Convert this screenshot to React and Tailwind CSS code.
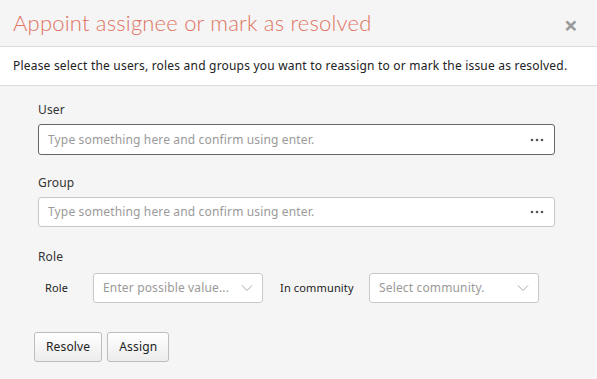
const Dots = () => (
  <svg width="14" height="4" viewBox="0 0 14 4" className="shrink-0">
    <circle cx="2" cy="2" r="1.3" fill="#555" />
    <circle cx="7" cy="2" r="1.3" fill="#555" />
    <circle cx="12" cy="2" r="1.3" fill="#555" />
  </svg>
);

const Chevron = () => (
  <svg width="12" height="8" viewBox="0 0 12 8" className="shrink-0">
    <path d="M1 1.5 L6 6.5 L11 1.5" fill="none" stroke="#a8a8a8" strokeWidth="1" />
  </svg>
);

const App = () => {
  return (
    <div className="w-[597px] h-[379px] bg-[#f5f5f5] overflow-hidden tracking-[0.15px]" style={{ fontFamily: "'Noto Sans', 'DejaVu Sans', sans-serif" }}>
      {/* Header */}
      <div className="h-[47px] flex items-center justify-between pl-[13px] pr-[19px] border-b border-[#dcdcdc]">
        <h1 className="text-[22px] font-light text-[#e0735f] tracking-[0.2px] pb-[2px]" style={{ fontFamily: "Lato, sans-serif" }}>
          Appoint assignee or mark as resolved
        </h1>
        <span className="text-[#9a9a9a] text-[24px] font-bold leading-none pt-[3px]">×</span>
      </div>

      {/* Description */}
      <div className="h-[39px] bg-white border-b border-[#dcdcdc] flex items-center pl-[13px] text-[12px] text-[#222] tracking-[0.2px]">
        Please select the users, roles and groups you want to reassign to or mark the issue as resolved.
      </div>

      {/* Form */}
      <div className="pl-[38px] pr-[42px] pt-[15px] text-[12px] text-[#333]">
        <div className="mb-[5px]">User</div>
        <div className="h-[31px] bg-white border border-[#666] rounded-[3px] flex items-center justify-between pl-[9px] pr-[10px]">
          <span className="text-[#9a9a9a]">Type something here and confirm using enter.</span>
          <Dots />
        </div>

        <div className="mt-[19px] mb-[5px]">Group</div>
        <div className="h-[30px] bg-white border border-[#c8c8c8] rounded-[3px] flex items-center justify-between pl-[9px] pr-[10px]">
          <span className="text-[#9a9a9a]">Type something here and confirm using enter.</span>
          <Dots />
        </div>

        <div className="mt-[21px] mb-[7px]">Role</div>
        <div className="flex items-center">
          <span className="text-[11px] w-[55px] pl-[7px] text-[#222]">Role</span>
          <div className="w-[170px] h-[30px] bg-white border border-[#c8c8c8] rounded-[3px] flex items-center justify-between pl-[9px] pr-[9px]">
            <span className="text-[#9a9a9a] truncate">Enter possible value...</span>
            <Chevron />
          </div>
          <span className="text-[11px] w-[106px] pl-[17px] text-[#222]">In community</span>
          <div className="w-[170px] h-[30px] bg-white border border-[#c8c8c8] rounded-[3px] flex items-center justify-between pl-[9px] pr-[9px]">
            <span className="text-[#9a9a9a] truncate">Select community.</span>
            <Chevron />
          </div>
        </div>

        <div className="flex gap-[5px] mt-[29px] -ml-[4px]">
          <button className="h-[30px] px-[11px] border border-[#bdbdbd] rounded-[3px] bg-gradient-to-b from-white to-[#ececec] text-[12px] text-[#222]">
            Resolve
          </button>
          <button className="h-[30px] px-[11px] border border-[#bdbdbd] rounded-[3px] bg-gradient-to-b from-white to-[#ececec] text-[12px] text-[#222]">
            Assign
          </button>
        </div>
      </div>
    </div>
  );
};

export default App;
